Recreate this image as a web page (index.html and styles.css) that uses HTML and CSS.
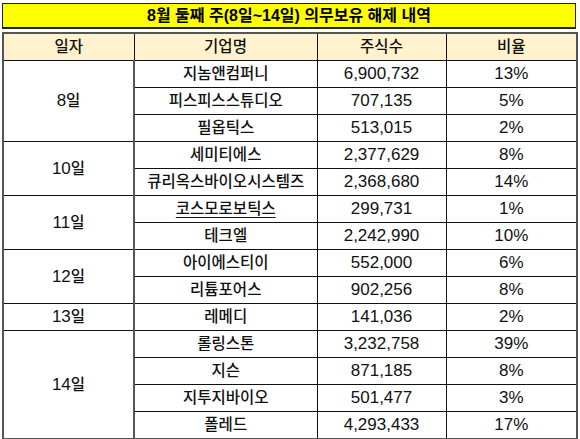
FILE: index.html
```html
<!DOCTYPE html>
<html lang="ko">
<head>
<meta charset="UTF-8">
<meta name="viewport" content="width=device-width, initial-scale=1.0">
<title>8월 둘째 주 의무보유 해제 내역</title>
<link rel="stylesheet" href="styles.css">
</head>
<body>

<div class="sheet">
  <div class="title">8월 둘째 주(8일~14일) 의무보유 해제 내역</div>

  <table class="release-table">
    <colgroup>
      <col class="col-date">
      <col class="col-name">
      <col class="col-shares">
      <col class="col-ratio">
    </colgroup>
    <thead>
      <tr>
        <th>일자</th>
        <th>기업명</th>
        <th>주식수</th>
        <th>비율</th>
      </tr>
    </thead>
    <tbody>
      <tr class="group-start">
        <td class="date" rowspan="3">8<span class="ko">일</span></td>
        <td class="name">지놈앤컴퍼니</td>
        <td>6,900,732</td>
        <td>13%</td>
      </tr>
      <tr>
        <td class="name">피스피스스튜디오</td>
        <td>707,135</td>
        <td>5%</td>
      </tr>
      <tr>
        <td class="name">필옵틱스</td>
        <td>513,015</td>
        <td>2%</td>
      </tr>

      <tr class="group-start">
        <td class="date" rowspan="2">10<span class="ko">일</span></td>
        <td class="name">세미티에스</td>
        <td>2,377,629</td>
        <td>8%</td>
      </tr>
      <tr>
        <td class="name">큐리옥스바이오시스템즈</td>
        <td>2,368,680</td>
        <td>14%</td>
      </tr>

      <tr class="group-start">
        <td class="date" rowspan="2">11<span class="ko">일</span></td>
        <td class="name linked">코스모로보틱스</td>
        <td>299,731</td>
        <td>1%</td>
      </tr>
      <tr>
        <td class="name">테크엘</td>
        <td>2,242,990</td>
        <td>10%</td>
      </tr>

      <tr class="group-start">
        <td class="date" rowspan="2">12<span class="ko">일</span></td>
        <td class="name">아이에스티이</td>
        <td>552,000</td>
        <td>6%</td>
      </tr>
      <tr>
        <td class="name">리튬포어스</td>
        <td>902,256</td>
        <td>8%</td>
      </tr>

      <tr class="group-start">
        <td class="date">13<span class="ko">일</span></td>
        <td class="name">레메디</td>
        <td>141,036</td>
        <td>2%</td>
      </tr>

      <tr class="group-start">
        <td class="date" rowspan="4">14<span class="ko">일</span></td>
        <td class="name">롤링스톤</td>
        <td>3,232,758</td>
        <td>39%</td>
      </tr>
      <tr>
        <td class="name">지슨</td>
        <td>871,185</td>
        <td>8%</td>
      </tr>
      <tr>
        <td class="name">지투지바이오</td>
        <td>501,477</td>
        <td>3%</td>
      </tr>
      <tr>
        <td class="name">폴레드</td>
        <td>4,293,433</td>
        <td>17%</td>
      </tr>
    </tbody>
  </table>
</div>

</body>
</html>
```

FILE: styles.css
```css
body {
    margin: 0;
    padding: 0;
    background-color: #fff;
    font-family: "Liberation Sans", "Noto Sans CJK KR", sans-serif;
    color: #111;
  }

  .sheet {
    width: 574px;
    padding: 3px 0 0 2px;
  }

  .title {
    height: 23px;
    line-height: 23px;
    background-color: #ffff00;
    border: 1px solid #222;
    border-bottom-width: 2px;
    text-align: center;
    font-size: 16px;
    font-weight: bold;
    color: #000;
  }

  .release-table {
    width: 574px;
    margin-top: 3px;
    border-collapse: collapse;
    table-layout: fixed;
    border: 2px solid #555;
  }

  .col-date { width: 131px; }
  .col-name { width: 183px; }
  .col-shares { width: 129px; }
  .col-ratio { width: 131px; }

  .release-table th,
  .release-table td {
    height: 26px;
    padding: 0;
    border: 1px solid #111;
    text-align: center;
    vertical-align: middle;
    font-size: 17px;
    font-weight: normal;
    line-height: 20px;
  }

  .release-table th {
    background-color: #fff2cc;
    font-size: 15.5px;
    font-weight: 500;
    border-bottom: 1px solid #111;
  }

  .release-table .date {
    border-right: 2px solid #555;
  }

  .release-table .name {
    font-size: 15.5px;
    font-weight: 500;
  }

  .release-table .ko {
    font-size: 15.5px;
    font-weight: 500;
  }

  .release-table .linked {
    text-decoration: underline;
    text-underline-offset: 3px;
  }

  .release-table tr.group-start td {
    border-top: 1px solid #111;
  }
```
